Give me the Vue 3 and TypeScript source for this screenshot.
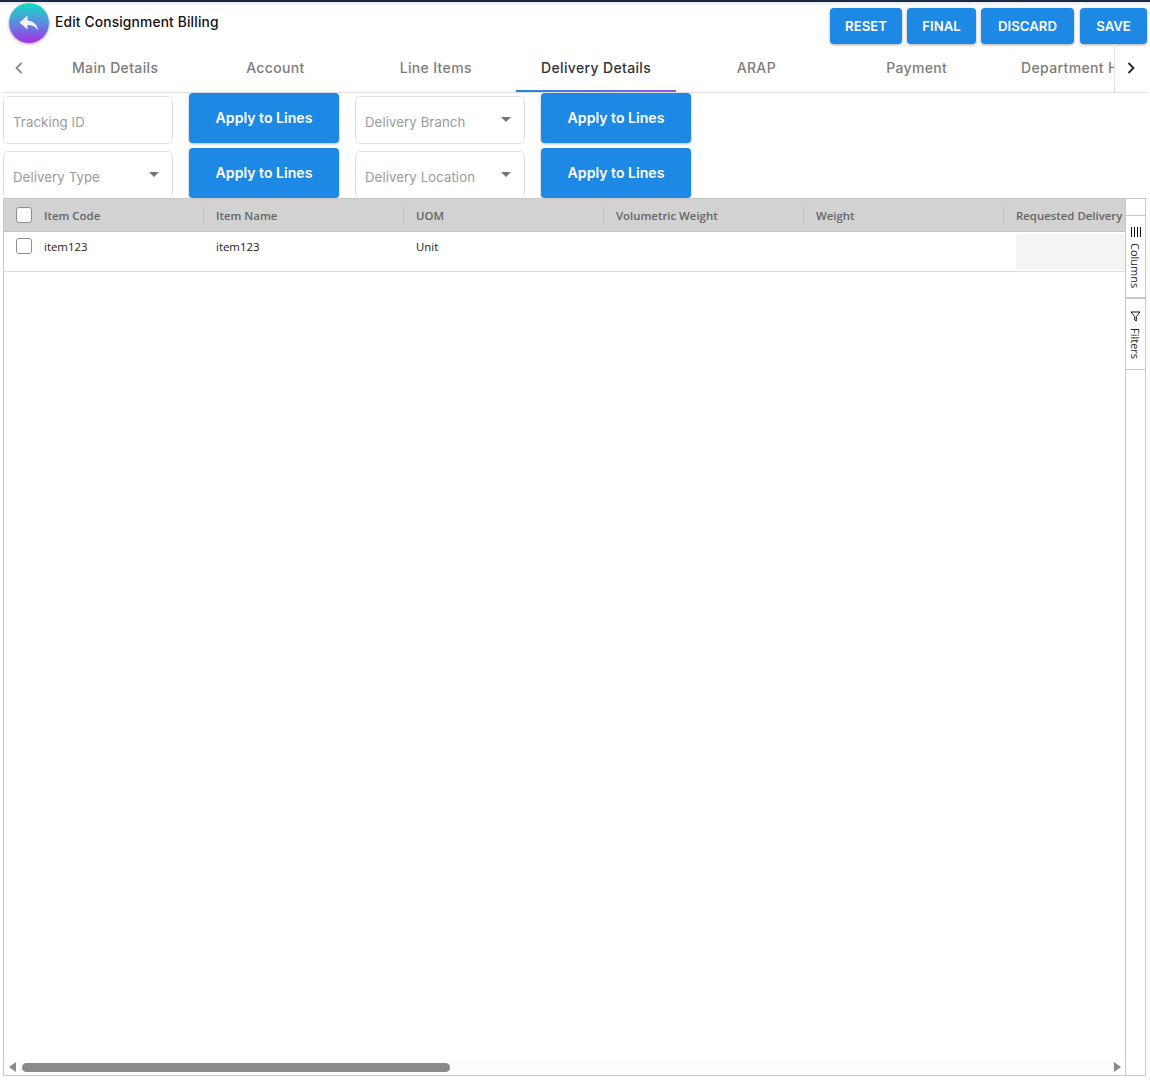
<template>
  <div class="page">
    <div class="header">
      <div class="title">
        <div class="backBtn">
          <svg width="24" height="24" viewBox="0 0 24 24">
            <path d="M10.5 9.500V4.500L2.500 11.500 10.500 18.500V14c5 0 8 1.500 10.500 5.500-.5-5.500-4-9.500-10.500-10z" fill="#f4f1fb" />
          </svg>
        </div>
        <span>Edit Consignment Billing</span>
      </div>
      <div class="actions">
        <button v-for="item in actions" :key="item" class="actionBtn">{{ item }}</button>
      </div>
    </div>

    <div class="tabs">
      <div class="tabArrow">
        <svg width="10" height="12" viewBox="0 0 10 12"><path d="M7.500 1 2.500 6l5 5" fill="none" stroke="#8a8a8a" stroke-width="1.800" /></svg>
      </div>
      <div class="tabList">
        <div v-for="(tab, index) in tabs" :key="tab" class="tab" :class="{ active: index === 3 }">{{ tab }}</div>
      </div>
      <div class="tabArrow right">
        <svg width="10" height="12" viewBox="0 0 10 12"><path d="M2.500 1l5 5-5 5" fill="none" stroke="#222" stroke-width="1.800" /></svg>
      </div>
    </div>

    <div class="form">
      <template v-for="field in fields" :key="field.label">
        <div class="field">
          <span>{{ field.label }}</span>
          <i v-if="field.select" class="caret"></i>
        </div>
        <button class="applyBtn">Apply to Lines</button>
      </template>
    </div>

    <div class="grid">
      <div class="gridMain">
        <div class="gridBody">
          <div class="gridHead">
            <div v-for="(col, index) in columns" :key="col" class="cell" :class="{ first: index === 0 }">
              <span v-if="index === 0" class="check"></span>
              <span class="headText">{{ col }}</span>
            </div>
          </div>
          <div class="gridRow">
            <div class="cell first"><span class="check"></span><span class="rowText">item123</span></div>
            <div class="cell"><span class="rowText">item123</span></div>
            <div class="cell"><span class="rowText">Unit</span></div>
            <div class="cell"></div>
            <div class="cell"></div>
            <div class="cell"><div class="dateBox"></div></div>
          </div>
        </div>
        <div class="hScroll">
          <i class="arrowLeft"></i>
          <div class="track"><div class="thumb"></div></div>
          <i class="arrowRight"></i>
        </div>
      </div>
      <div class="sideBar">
        <div class="sideGap"></div>
        <div class="sideBtn columnsBtn">
          <svg width="11" height="10" viewBox="0 0 11 10" shape-rendering="crispEdges"><path d="M1.500 0v10M4.500 0v10M7.500 0v10M10.500 0v10" stroke="#111" stroke-width="1" /></svg>
          <span>Columns</span>
        </div>
        <div class="sideBtn filtersBtn">
          <svg width="11" height="11" viewBox="0 0 11 11"><path d="M1 1h9L6.300 5.600V10L4.700 8.800V5.600z" fill="none" stroke="#111" stroke-width="1" /></svg>
          <span>Filters</span>
        </div>
      </div>
    </div>
  </div>
</template>

<script setup lang="ts">
type IField = {
  label: string,
  select: boolean
}

const actions = ['RESET', 'FINAL', 'DISCARD', 'SAVE']

const tabs = ['Main Details', 'Account', 'Line Items', 'Delivery Details', 'ARAP', 'Payment', 'Department Head']

const fields: IField[] = [
  { label: 'Tracking ID', select: false },
  { label: 'Delivery Branch', select: true },
  { label: 'Delivery Type', select: true },
  { label: 'Delivery Location', select: true }
]

const columns = ['Item Code', 'Item Name', 'UOM', 'Volumetric Weight', 'Weight', 'Requested Delivery']
</script>

<style>
body {
  background: #fff;
}
</style>

<style scoped>
.page {
  width: 1150px;
  height: 1085px;
  box-sizing: border-box;
  padding: 1px 3px 9px 3px;
  border-top: 2px solid #1c2b45;
  display: flex;
  flex-direction: column;
  font-family: "Inter", "Open Sans", sans-serif;
  overflow: hidden;
  background: linear-gradient(#e6e8ec, #fff 4px);
}

.header {
  height: 41px;
  display: flex;
  justify-content: space-between;
}

.title {
  display: flex;
  align-items: center;
  gap: 6px;
  padding-left: 6px;
  font-size: 13.8px;
  font-weight: 500;
  color: #111;
  height: 40px;
}

.title span {
  margin-top: -2px;
  letter-spacing: .15px;
}

.backBtn {
  width: 40px;
  height: 40px;
  border-radius: 50%;
  background: linear-gradient(#12dcc4, #5a8ce0 50%, #a82ee6);
  box-shadow: 0 1px 3px rgba(0, 0, 0, .35);
  display: flex;
  align-items: center;
  justify-content: center;
}

.actions {
  display: flex;
  gap: 5px;
  padding-top: 5px;
}

.actionBtn {
  height: 36px;
  padding: 0;
  border: none;
  border-radius: 4px;
  background: #1e88e5;
  color: #fff;
  font-family: inherit;
  font-size: 13.2px;
  font-weight: 600;
  box-shadow: 0 1px 3px rgba(0, 0, 0, .35);
}

.actionBtn:nth-child(1) { width: 72px; }
.actionBtn:nth-child(2) { width: 69px; }
.actionBtn:nth-child(3) { width: 93px; }
.actionBtn:nth-child(4) { width: 67px; margin-left: 1px; }

.tabs {
  height: 48px;
  display: flex;
  border-bottom: 1px solid #ddd;
}

.tabArrow {
  width: 32px;
  flex: none;
  display: flex;
  align-items: center;
  justify-content: center;
}

.tabArrow.right {
  width: 33px;
  border-left: 1px solid #e4e4e4;
  box-sizing: border-box;
}

.tabList {
  flex: 1;
  display: flex;
  overflow: hidden;
}

.tab {
  width: 160.3px;
  box-sizing: border-box;
  padding-bottom: 2px;
  flex: none;
  display: flex;
  align-items: center;
  justify-content: center;
  font-size: 14px;
  font-weight: 500;
  letter-spacing: .35px;
  color: #7c7c7c;
  white-space: nowrap;
  position: relative;
}

.tab:last-child {
  padding-left: 12px;
}

.tab.active {
  color: #333;
}

.tab.active::after {
  content: "";
  position: absolute;
  left: 0;
  right: 0;
  bottom: 0;
  height: 2px;
  background: linear-gradient(90deg, #1e88e5, #8e5ae8);
}

.form {
  display: grid;
  grid-template-columns: 170px 150px 170px 150px;
  grid-auto-rows: 55px;
  column-gap: 16px;
  justify-content: start;
  height: 105px;
  overflow: hidden;
}

.field {
  box-sizing: border-box;
  height: 48px;
  margin-top: 3px;
  padding: 0 9px;
  border: 1px solid #e0e0e0;
  border-radius: 5px;
  display: flex;
  align-items: center;
  justify-content: space-between;
  font-size: 13.2px;
  letter-spacing: .1px;
  color: #9a9a9a;
}

.field span {
  margin-top: 4px;
}

.caret {
  width: 0;
  height: 0;
  margin-right: 4px;
  margin-top: -2px;
  border-left: 5px solid transparent;
  border-right: 5px solid transparent;
  border-top: 5px solid #757575;
}

.applyBtn {
  height: 50px;
  padding: 0 0 2px;
  border: none;
  border-radius: 4px;
  background: #1e88e5;
  color: #fff;
  font-family: inherit;
  font-size: 14.1px;
  font-weight: 600;
  box-shadow: 0 1px 3px rgba(0, 0, 0, .3);
}

.grid {
  flex: 1;
  display: flex;
  min-height: 0;
  border: 1px solid #c8c8c8;
  border-right: none;
  font-family: "Open Sans", sans-serif;
  font-size: 11.4px;
  width: 1143px;
  box-sizing: border-box;
}

.gridMain {
  flex: 1;
  min-width: 0;
  display: flex;
  flex-direction: column;
}

.gridBody {
  flex: 1;
  overflow: hidden;
}

.gridHead,
.gridRow {
  display: grid;
  grid-template-columns: 199px 200px 200px 200px 200px 200px;
}

.gridHead {
  height: 32px;
  background: #d2d2d2;
  border-bottom: 1px solid #c4c4c4;
  color: #666;
  font-weight: 600;
}

.gridRow {
  height: 39px;
  border-bottom: 1px solid #dcdcdc;
  color: #222;
}

.cell {
  display: flex;
  align-items: center;
  padding-left: 13px;
  white-space: nowrap;
  overflow: hidden;
  position: relative;
}

.gridHead .cell:not(:first-child)::before {
  content: "";
  position: absolute;
  left: 0;
  top: 8px;
  height: 17px;
  border-left: 1px solid #c2c2c2;
}

.cell.first {
  padding-left: 12px;
  gap: 12px;
}

.gridRow .cell {
  align-items: flex-start;
  padding-top: 6px;
}

.rowText {
  margin-top: 1px;
}

.check {
  width: 14px;
  height: 14px;
  flex: none;
  background: #fff;
  border: 1px solid #8a8f98;
  border-radius: 3px;
}

.gridRow .cell:last-child {
  padding-top: 2px;
}

.dateBox {
  width: 188px;
  height: 36px;
  background: #f4f4f4;
  border-radius: 3px;
}

.hScroll {
  height: 14px;
  margin-bottom: 1px;
  display: flex;
  align-items: center;
  gap: 6px;
  padding: 0 4px 0 5px;
  background: #fdfdfd;
}

.track {
  flex: 1;
}

.thumb {
  width: 428px;
  height: 9px;
  border-radius: 5px;
  background: #8a8a8a;
}

.arrowLeft,
.arrowRight {
  width: 0;
  height: 0;
  border-top: 5px solid transparent;
  border-bottom: 5px solid transparent;
}

.arrowLeft {
  border-right: 7px solid #8a8a8a;
}

.arrowRight {
  border-left: 7px solid #8a8a8a;
}

.sideBar {
  width: 21px;
  flex: none;
  box-sizing: border-box;
  border-left: 1px solid #c8c8c8;
  border-right: 1px solid #c8c8c8;
  display: flex;
  flex-direction: column;
  color: #222;
}

.sideGap {
  height: 16px;
  border-bottom: 1px solid #c8c8c8;
}

.sideBtn {
  display: flex;
  flex-direction: column;
  align-items: center;
  gap: 6px;
  border-bottom: 1px solid #c8c8c8;
  box-sizing: border-box;
  padding-top: 11px;
}

.columnsBtn {
  height: 83px;
  border-bottom-width: 2px;
}

.filtersBtn {
  height: 71px;
  padding-top: 12px;
}

.sideBtn span {
  writing-mode: vertical-rl;
  font-size: 11px;
  line-height: 1;
}
</style>
